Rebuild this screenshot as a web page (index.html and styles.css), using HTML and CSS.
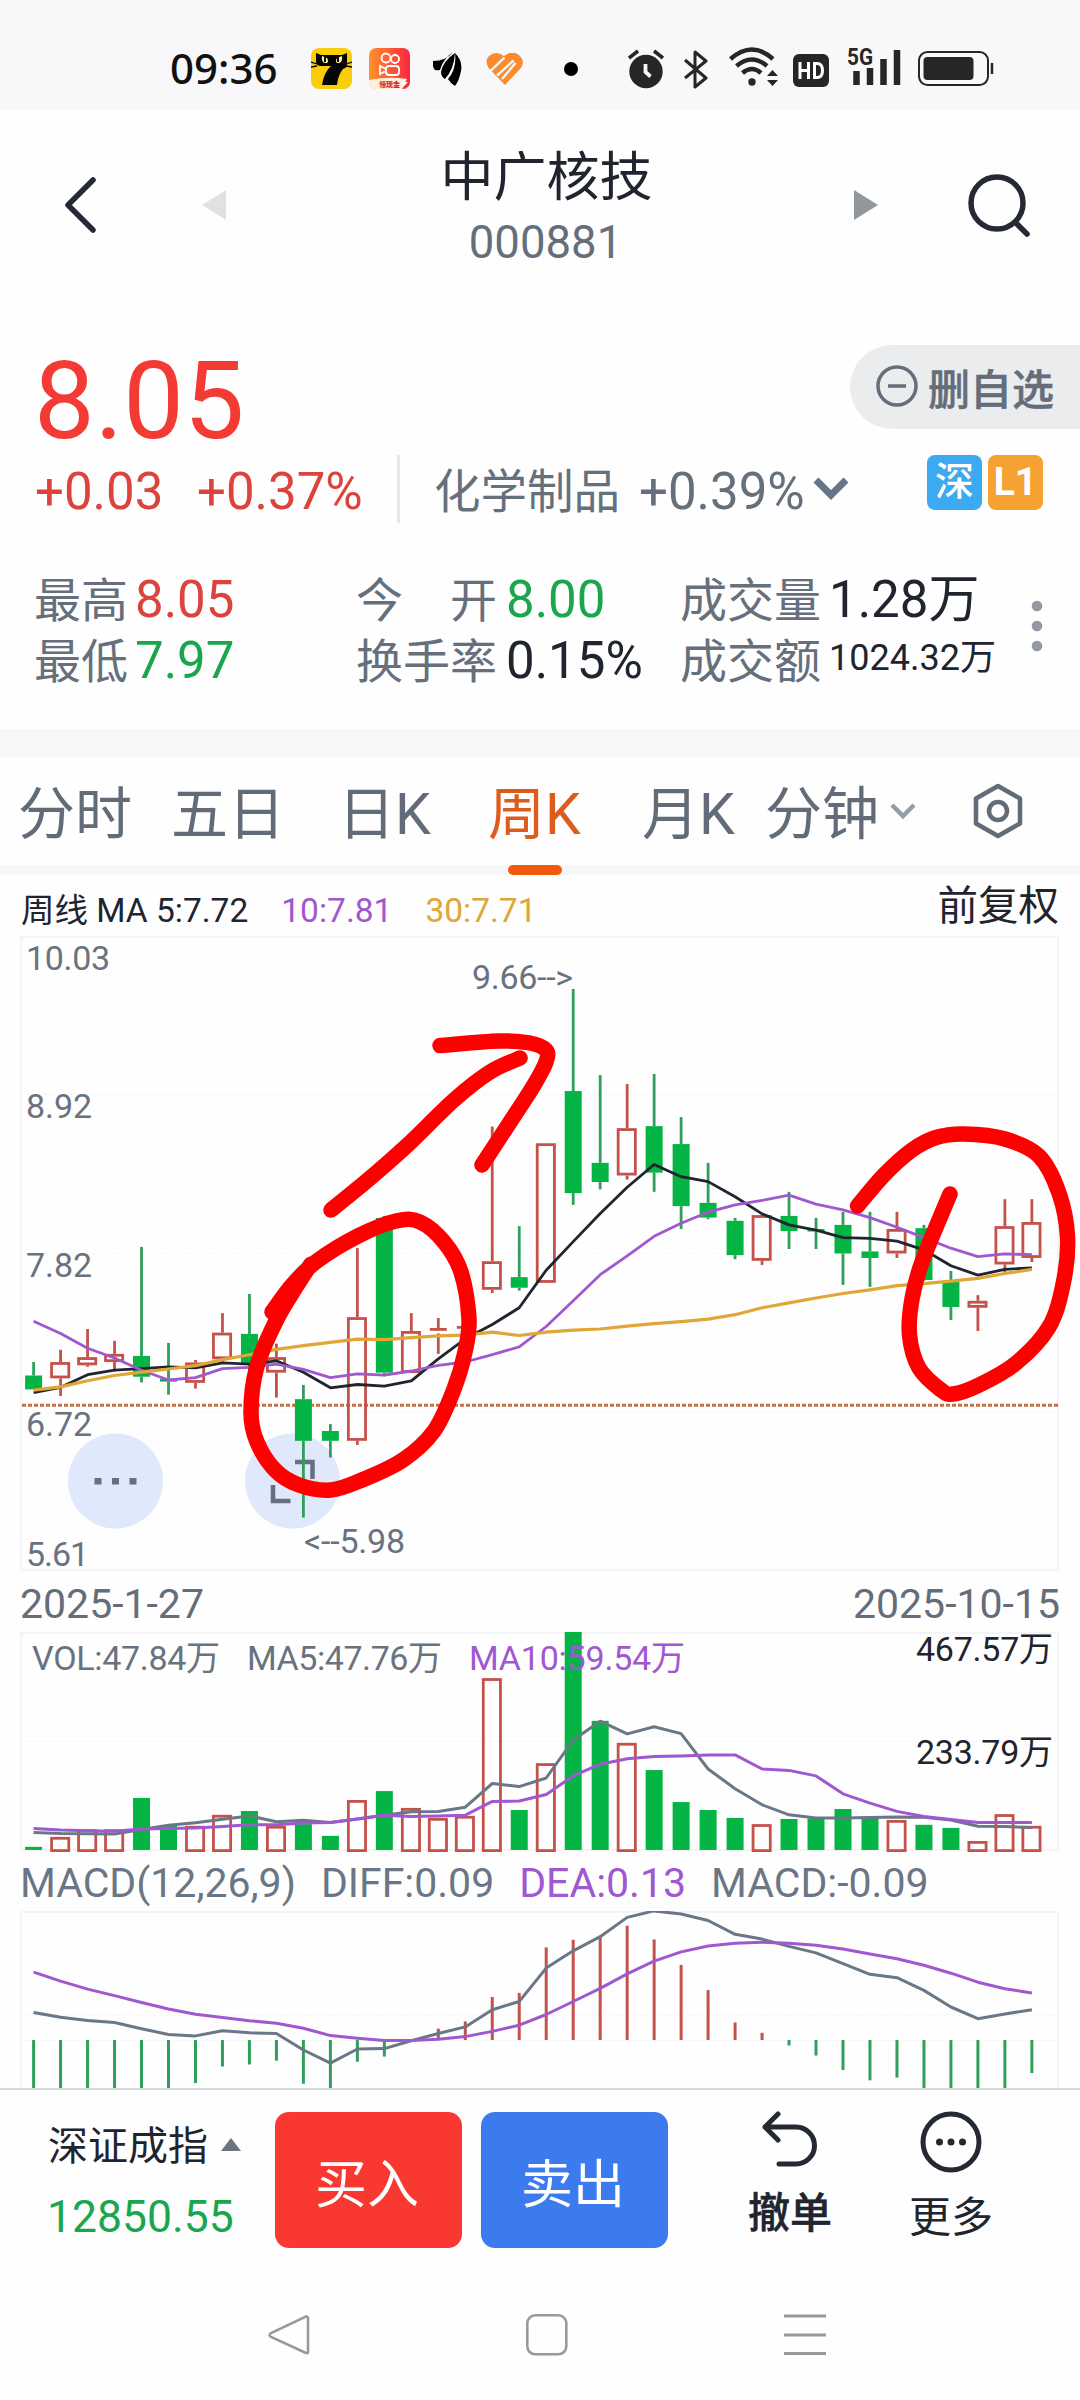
FILE: index.html
```html
<!DOCTYPE html>
<html lang="zh-CN">
<head>
<meta charset="utf-8">
<title>中广核技 000881</title>
<link rel="stylesheet" href="styles.css">
</head>
<body>
<header class="status">
  <span class="clock">09:36</span>
  <div class="apps">
    <svg width="41" height="41" viewBox="0 0 41 41"><rect width="41" height="41" rx="8" fill="#f9cd08"/><path d="M5 5l5 2h21l5-2v11q0 4-4 5q-5 6-6 16H11q2-13 9-19H9q-4-1-4-4z" fill="#050505"/><path d="M0 14l6 2M0 19l6-1M41 14l-6 2M41 19l-6-1" stroke="#050505" stroke-width="1.3"/><path d="M11 8q-1 8 5 7q2-2 0-5zM31 8q1 8-5 7q-2-2 0-5z" fill="#fff5a0"/><path d="M14 9v5M27 9v5" stroke="#050505" stroke-width="2"/></svg>
    <svg width="41" height="41" viewBox="0 0 41 41"><defs><linearGradient id="ks"><stop stop-color="#ff922d"/><stop offset="1" stop-color="#fb2540"/></linearGradient></defs><rect width="41" height="41" rx="7" fill="url(#ks)"/><g fill="none" stroke="#fff" stroke-width="1.800"><circle cx="17" cy="10" r="4.500"/><circle cx="26" cy="11" r="4"/><rect x="17" y="18" width="13" height="9" rx="3"/><path d="M17 21l-6-3v8l6-3"/></g><path d="M0 32q20-4 38-1l-5 10H7q-6 0-7-6z" fill="#fff0dc"/><text x="10" y="39" class="tiny">领现金</text><path d="M37 30l-6 6h4l-3 5 7-7h-4z" fill="#fff"/></svg>
    <svg width="29" height="34" viewBox="0 0 29 34" fill="#000"><path d="M0 9Q13 9 20 0Q10 7 7 18Q2 19 1 17Q-1 13 0 9zM8 20Q10 9 22 1Q21 17 12 27Q8 25 8 20zM15 27Q24 17 22 1Q30 9 28 19Q26 29 22 34Q18 32 15 27z"/></svg>
    <svg width="38" height="32" viewBox="0 0 38 32"><path d="M19 32L3 15.500Q-2 8 3 3Q10-3 18 3Q27-4 34 3Q40 9 34 16z" fill="#fb8b2d"/><path d="M18.500 4.500L4.500 18M27.500 7.500L11 22.500M29.500 10L16 26" stroke="#f8f8fa" stroke-width="2.400"/></svg>
  </div>
  <span class="dot"></span>
  <div class="system">
    <svg width="36" height="40" viewBox="0 0 36 40"><circle cx="18" cy="22.500" r="16.700" fill="#262626"/><path d="M1 9l9-7M35 9l-9-7" stroke="#262626" stroke-width="3.500"/><path d="M17.500 15v8l5 4.500" fill="none" stroke="#f8f8fa" stroke-width="3.800"/></svg>
    <svg width="24" height="40" viewBox="0 0 24 40"><path d="M1 11l21 18-11 9V3l11 9L1 29" fill="none" stroke="#262626" stroke-width="3" stroke-linejoin="round"/></svg>
    <svg width="50" height="40" viewBox="0 0 50 40"><g fill="none" stroke="#262626" stroke-width="4.500"><path d="M1.500 12Q23-7 44 12M7.500 19Q23 6 38 19M13.500 26Q23 18 32 26"/></g><circle cx="23" cy="35" r="3.700" fill="#262626"/><path d="M38 29l5.500-6 5.500 6zM38 33h11l-5.500 6z" fill="#262626"/></svg>
    <svg width="36" height="33" viewBox="0 0 36 33"><rect width="36" height="33" rx="6" fill="#262626"/><path d="M7 8v17M15.500 8v17M7 16.500h8.500M21.500 9.500v14h3q5-.5 5-7t-5-7z" fill="none" stroke="#fff" stroke-width="3"/></svg>
    <svg class="signal" width="54" height="40" viewBox="0 0 54 40"><text x="-1" y="18" class="five-g" textLength="26" lengthAdjust="spacingAndGlyphs">5G</text><path d="M8.500 24v14M22 21v17M35.500 12v26M49 3v35" stroke="#262626" stroke-width="6.500"/></svg>
    <svg width="76" height="35" viewBox="0 0 76 35"><rect x="1" y="1" width="69" height="33" rx="8.500" fill="none" stroke="#262626" stroke-width="2"/><rect x="5.500" y="6" width="50" height="23" rx="4" fill="#262626"/><path d="M74 12v11" stroke="#262626" stroke-width="2.500"/></svg>
  </div>
</header>

<nav class="titlebar">
  <svg class="back" width="36" height="56" viewBox="0 0 36 56"><path d="M31 3L6 28l25 25" fill="none" stroke="#252934" stroke-width="5.500" stroke-linecap="round" stroke-linejoin="round"/></svg>
  <svg class="prev" width="24" height="30" viewBox="0 0 24 30"><path d="M24 0v30L0 15z" fill="#dfe1e3"/></svg>
  <div class="stock"><h1>中广核技</h1><p>000881</p></div>
  <svg class="next" width="24" height="30" viewBox="0 0 24 30"><path d="M0 0v30l24-15z" fill="#91979b"/></svg>
  <svg class="search" width="66" height="66" viewBox="0 0 66 66"><circle cx="30" cy="30" r="26" fill="none" stroke="#252934" stroke-width="5.500"/><path d="M49 50l11 11" stroke="#252934" stroke-width="5.500" stroke-linecap="round"/></svg>
</nav>

<section class="quote">
  <div class="price-row">
    <strong class="price">8.05</strong>
    <button class="watch"><svg width="42" height="42" viewBox="0 0 42 42" fill="none" stroke="#646d79" stroke-width="3.500"><circle cx="21" cy="21" r="19"/><path d="M12 21h18"/></svg>删自选</button>
  </div>
  <div class="change-row">
    <span class="up">+0.03</span><span class="up pct">+0.37%</span>
    <span class="divider"></span>
    <span class="sector">化学制品</span><span class="sector-pct">+0.39%</span>
    <svg class="sector-arrow" width="36" height="24" viewBox="0 0 36 24"><path d="M3 3l15 15L33 3" fill="none" stroke="#65758a" stroke-width="7"/></svg>
    <span class="badge sz">深</span><span class="badge l1">L1</span>
  </div>
  <div class="stats">
    <span class="label">最高</span><span class="up">8.05</span>
    <span class="label spread"><i>今</i><i>开</i></span><span class="down">8.00</span>
    <span class="label">成交量</span><span>1.28万</span>
    <span class="label">最低</span><span class="down">7.97</span>
    <span class="label">换手率</span><span>0.15%</span>
    <span class="label">成交额</span><span class="small">1024.32万</span>
  </div>
  <svg class="more-dots" width="12" height="52" viewBox="0 0 12 52" fill="#9299a2"><circle cx="6" cy="6" r="5.300"/><circle cx="6" cy="26" r="5.300"/><circle cx="6" cy="46" r="5.300"/></svg>
</section>

<nav class="tabs">
  <span class="t1">分时</span><span class="t2">五日</span><span class="t3">日K</span><span class="t4 active">周K</span><span class="t5">月K</span><span class="t6">分钟</span>
  <svg class="tab-arrow" width="26" height="18" viewBox="0 0 26 18"><path d="M2 3l11 11L24 3" fill="none" stroke="#979da5" stroke-width="4.500"/></svg>
  <svg class="gear" width="52" height="56" viewBox="0 0 52 56" fill="none" stroke="#626b78" stroke-width="4.500" stroke-linejoin="round"><path d="M26 3L48 15.500v25L26 53 4 40.500v-25z"/><circle cx="26" cy="28" r="9"/></svg>
</nav>

<main class="charts">
  <div class="legend"><span>周线 MA 5:7.72</span><span class="purple">10:7.81</span><span class="gold">30:7.71</span><span class="adjust">前复权</span></div>
  <svg id="kline" class="plot" width="1080" height="635" viewBox="0 0 1080 635"></svg>
  <div class="dates"><span>2025-1-27</span><span>2025-10-15</span></div>
  <svg id="volume" class="plot" width="1080" height="221" viewBox="0 0 1080 221"></svg>
  <div class="macd-legend"><span>MACD(12,26,9)</span><span>DIFF:0.09</span><span class="purple">DEA:0.13</span><span>MACD:-0.09</span></div>
  <svg id="macd" class="plot clipped" width="1080" height="177" viewBox="0 0 1080 177"></svg>
  <svg id="marks" class="marks" width="1080" height="1213" viewBox="0 875 1080 1213"></svg>
</main>

<footer class="actions">
  <div class="index"><span>深证成指<svg width="20" height="13" viewBox="0 0 20 13"><path d="M10 0l10 13H0z" fill="#6b7480"/></svg></span><b>12850.55</b></div>
  <button class="buy">买入</button>
  <button class="sell">卖出</button>
  <div class="tool undo"><svg width="60" height="60" viewBox="0 0 60 60" fill="none" stroke="#252934" stroke-width="5" stroke-linecap="round" stroke-linejoin="round"><path d="M18 3L5 16l13 13M5 16h31a18.500 18.500 0 0 1 0 37H19"/></svg><b>撤单</b></div>
  <div class="tool"><svg width="62" height="62" viewBox="0 0 62 62"><circle cx="31" cy="31" r="28" fill="none" stroke="#252934" stroke-width="5"/><g fill="#252934"><circle cx="19.500" cy="31" r="3.500"/><circle cx="31" cy="31" r="3.500"/><circle cx="42.500" cy="31" r="3.500"/></g></svg><span>更多</span></div>
</footer>

<nav class="sysnav">
  <svg width="42" height="44" viewBox="0 0 42 44"><path d="M38 3.500Q40 3 40 5v34q0 2-2 1L3 24q-3-2 0-4z" fill="none" stroke="#999" stroke-width="2.500"/></svg>
  <svg width="42" height="44" viewBox="0 0 42 44"><rect x="1.300" y="2.300" width="39" height="39" rx="8" fill="none" stroke="#999" stroke-width="2.600"/></svg>
  <svg width="42" height="44" viewBox="0 0 42 44"><path d="M0 3h42M0 22h42M0 40.500h42" stroke="#999" stroke-width="3"/></svg>
</nav>
<script src="chart.js"></script>
</body>
</html>
```
FILE: styles.css
```css
* { box-sizing: border-box; margin: 0; padding: 0; }
body { width: 1080px; height: 2400px; background: #fefefe; color: #20242e; font-family: Roboto, "Noto Sans CJK SC", sans-serif; overflow: hidden; }
svg { display: block; flex: none; }
button { border: 0; font-family: inherit; }
span, b, strong, h1, p { white-space: nowrap; }
i { font-style: normal; }
.up { color: #dc433d; }
.down { color: #1ba64d; }
.purple { color: #a057cf; }
.gold { color: #e0a637; }

.status { height: 110px; background: #f8f8fa; display: flex; align-items: center; padding: 27px 0 0 170px; }
.clock { width: 108px; font: 500 42px/50px "Noto Sans", sans-serif; color: #111; margin-top: -2px; }
.apps { display: flex; align-items: center; margin-left: 33px; }
.apps svg:nth-child(2) { margin-left: 17px; }
.apps svg:nth-child(3) { margin-left: 23px; }
.apps svg:nth-child(4) { margin-left: 24px; }
.tiny { font: 900 7px "Noto Sans CJK SC", sans-serif; fill: #d82922; }
.dot { width: 14px; height: 14px; border-radius: 50%; background: #000; margin-left: 40px; }
.system { display: flex; align-items: center; margin-left: 50px; }
.system svg:nth-child(2) { margin-left: 20px; }
.system svg:nth-child(3) { margin-left: 21px; margin-bottom: 3px; }
.system svg:nth-child(4) { margin-left: 14px; margin-top: 3px; }
.system svg:nth-child(5) { margin-left: 19px; margin-bottom: 4px; }
.system svg:nth-child(6) { margin-left: 16px; }
.signal { overflow: visible; }
.five-g { font: 700 24px Roboto, sans-serif; fill: #262626; }

.titlebar { height: 190px; display: flex; align-items: center; padding-left: 62px; }
.prev { margin-left: 104px; }
.stock { width: 628px; text-align: center; padding: 9px 0 0 13px; }
.stock h1 { font-size: 53px; line-height: 66px; font-weight: 400; }
.stock p { font-size: 45.500px; line-height: 64px; color: #656e7b; padding-right: 2px; }
.search { margin-left: 89px; margin-top: 1px; }

.quote { position: relative; height: 429px; padding-left: 35px; }
.price-row { display: flex; justify-content: space-between; align-items: flex-start; padding-top: 45px; height: 155px; }
.price { font-size: 108px; line-height: 112px; font-weight: 400; color: #f33b34; margin-left: -1px; }
.watch { width: 230px; height: 84px; border-radius: 42px 0 0 42px; background: #ebecee; color: #646d79; display: flex; align-items: center; gap: 10px; padding: 0 0 2px 26px; font-size: 42px; font-weight: 500; -webkit-text-stroke: .5px; }
.change-row { display: flex; align-items: center; height: 68px; font-size: 51px; line-height: 68px; }
.change-row > span:not(.badge):not(.divider) { padding-top: 5px; }
.change-row .up { width: 162px; }
.change-row .pct { width: 166px; }
.divider { width: 3px; height: 68px; background: #e5e7ed; margin-left: 34px; }
.change-row > .sector { font-size: 46.500px; color: #66707d; margin-left: 34px; width: 205px; }
.sector-pct { color: #66707d; width: 166px; }
.sector-arrow { margin-left: 8px; }
.badge { width: 55px; height: 55px; border-radius: 8px; color: #fff; font-size: 39px; font-weight: 500; line-height: 55px; text-align: center; margin-bottom: 13px; }
.sz { background: #3baaf0; margin-left: 78px; }
.l1 { background: #f6a233; margin-left: 6px; font-weight: 700; }
.stats { display: grid; grid-template-columns: 101px 221px 150px 174px 149px 190px; grid-auto-rows: 61px; align-items: baseline; margin: 46px 0 0 -1px; font-size: 51px; line-height: 61px; }
.label { font-size: 47px; color: #66707d; }
.spread { display: flex; justify-content: space-between; width: 141px; }
.stats .small { font-size: 36px; align-self: start; line-height: 57px; }
.more-dots { position: absolute; left: 1031px; top: 300px; }

.tabs { height: 146px; border-top: 28px solid #f7f7fa; border-bottom: 10px solid #f7f7fa; display: flex; align-items: center; padding-left: 18px; font-size: 57px; line-height: 80px; color: #626b78; }
.tabs span { padding-top: 7px; }
.t1 { width: 153px; }
.t2 { width: 167px; }
.t3 { width: 150px; }
.t4 { width: 154px; }
.t5 { width: 123px; }
.t6 { width: 125px; }
.active { color: #dc5c1d; position: relative; }
.active::after { content: ""; position: absolute; left: 20px; bottom: -20px; width: 54px; height: 10px; border-radius: 5px; background: #f15a0c; }
.gear { margin-left: 56px; }

.charts { position: relative; height: 1213px; }
.plot { overflow: visible; }
.clipped { overflow: hidden; }
.legend { height: 61px; display: flex; align-items: flex-start; padding: 11px 21px 0 21px; font-size: 33.500px; line-height: 50px; }
.legend .purple { margin-left: 33px; }
.legend .gold { margin-left: 33px; }
.adjust { margin-left: auto; font-size: 40.500px; line-height: 40px; }
.dates { height: 61px; display: flex; justify-content: space-between; padding: 0 20px; font-size: 41px; line-height: 66px; color: #656d79; }
.macd-legend { height: 58px; display: flex; padding-left: 20px; font-size: 41px; line-height: 60px; color: #6a7685; }
.macd-legend span:nth-child(n+2) { margin-left: 25px; }
.marks { position: absolute; left: 0; top: 0; }
.axis { font: 34px Roboto, "Noto Sans CJK SC", sans-serif; fill: #69727f; }
.dark { fill: #20242e; }
.violet { fill: #a057cf; }

.actions { height: 177px; border-top: 2px solid #d5dadb; display: flex; align-items: flex-start; padding-left: 48px; }
.index { width: 227px; padding-top: 29px; }
.index span { display: flex; align-items: center; gap: 13px; font-size: 40px; line-height: 56px; }
.index svg { margin-bottom: 6px; }
.index b { display: block; font-size: 44.500px; line-height: 60px; font-weight: 400; color: #1ba64d; margin-top: 12px; margin-left: -1px; }
.buy, .sell { width: 187px; height: 136px; margin-top: 22px; border-radius: 14px; color: #fff; font-size: 52px; padding: 1px 3px 0 0; }
.buy { background: #f93831; }
.sell { background: #3c7bed; margin-left: 19px; }
.tool { width: 120px; display: flex; flex-direction: column; align-items: center; font-size: 42px; line-height: 60px; padding-top: 21px; margin-left: 41px; }
.tool span { margin-top: 15px; }
.undo { margin-left: 62px; }
.tool b { font-weight: 500; margin-top: 13px; -webkit-text-stroke: .5px; }
.sysnav { display: flex; justify-content: space-between; padding: 48px 254px 0 268px; }
```
FILE: chart.js
```js
const STEP = 26.98;
const cx = i => 33.6 + STEP * i;
const GREEN = '#04b444', RED = '#c4514a', SLATE = '#6a7786', VIOLET = '#a057cf';

const line = (x1, y1, x2, y2, c, w, extra = '') =>
  `<path d="M${x1} ${y1}L${x2} ${y2}" stroke="${c}" stroke-width="${w}" ${extra}/>`;
const curve = (vals, y, c, w = 3) =>
  `<polyline fill="none" stroke="${c}" stroke-width="${w}" stroke-linejoin="round" points="${vals.map((v, i) => cx(i).toFixed(1) + ',' + y(v).toFixed(1)).join(' ')}"/>`;
const text = (x, y, s, len, cls = '') =>
  `<text x="${x}" y="${y}" class="axis ${cls}" textLength="${len}">${s}</text>`;
const frame = h => `<rect x="21" y="1" width="1037" height="${h}" fill="none" stroke="#f4f4f6" stroke-width="2"/>`;
const dash = y => line(21, y, 1058, y, '#f4f5f6', 1, 'stroke-dasharray="4 2"');
const bar = (i, up, t, b) => up
  ? `<rect x="${cx(i) - 9}" y="${t + 1.4}" width="17.2" height="${Math.max(b - t - 2.8, 1)}" fill="none" stroke="${RED}" stroke-width="2.8"/>`
  : `<rect x="${cx(i) - 8.5}" y="${t}" width="17" height="${Math.max(b - t, 2.5)}" fill="${GREEN}"/>`;

/* candles: [direction, high, body top, body bottom, low] */
const candles = [
  [0,985,1018,1052,1052],[1,955,985,1025,1068],[1,904,973,993,997],[1,933,965,985,1008],[0,703,970,1021,1035],
  [0,938,1026,1033,1065],[1,980,986,1036,1050],[1,865,913,978,985],[0,818,916,990,1020],[1,940,973,1011,1072],
  [0,1041,1076,1178,1366],[0,1137,1154,1178,1219],[1,706,875,1178,1188],[0,627,632,1011,1020],[1,865,909,1012,1012],
  [2,877,905,905,965],[2,897,900,900,903],[1,408,738,808,816],[0,652,777,803,810],[1,449,449,791,791],
  [0,71,321,571,600],[0,282,497,544,562],[1,304,412,528,538],[0,279,407,521,568],[0,385,451,603,659],
  [0,497,595,631,635],[0,632,639,723,733],[1,625,625,737,747],[0,568,627,664,708],[0,632,659,665,708],
  [0,617,649,719,796],[0,617,714,730,801],[1,617,659,719,730],[0,649,657,784,786],[0,762,789,850,882],
  [1,821,835,852,909],[1,586,652,746,765],[1,586,642,730,740]];
const ma5 = [1060,1047,1016,1005,1001,997,999,987,990,982,1010,1048,1040,1044,1031,977,928,893,852,760,690,621,557,501,531,543,580,622,649,662,680,682,689,710,749,772,758,754];
const ma10 = [885,915,951,975,1005,1029,1023,1001,998,990,1003,1023,1014,1017,1007,993,985,967,948,898,835,771,725,677,645,618,600,589,576,598,612,631,655,680,706,727,720,722];
const ma30 = [1054,1046,1031,1018,1010,1002,994,979,967,954,945,937,929,930,925,921,919,912,920,912,907,904,897,891,886,880,869,852,840,828,817,808,798,793,787,780,768,758];

const py = v => v / 2.45 + 24;
let k = frame(633) + [329, 718, 1108].map(v => dash(py(v))).join('');
k += line(22, py(1091), 1058, py(1091), '#c4704a', 3, 'stroke-dasharray="4 2"');
k += `<circle cx="115.5" cy="545" r="47.5" fill="#dfe9fb"/><circle cx="292.5" cy="545" r="47.5" fill="#dfe9fb"/>`;
k += `<path d="M94.5 542h7v6.5h-7zM112 542h7v6.5h-7zM129.5 542h7v6.5h-7z" fill="#66707e"/>`;
k += `<path d="M295 526h17.5v17M273 549v16h17.5" fill="none" stroke="#66707e" stroke-width="4.5"/>`;
candles.forEach(([up, h, t, b, l], i) => {
  const x = cx(i), c = up ? RED : '#2f9f5b';
  if (up === 2) {
    k += line(x - 8.5, py(t), x + 8.5, py(t), c, 2.8) + line(x, py(h), x, py(t), c, 2.8) + (l > b + 5 ? line(x, py(b) + 4, x, py(l), c, 2.8) : '');
  } else {
    k += line(x, py(h), x, py(t), c, 2.8) + line(x, py(b), x, py(l), c, 2.8) + bar(i, up, py(t), py(b));
  }
});
k += curve(ma5, py, '#20242e', 2.8) + curve(ma10, py, VIOLET, 2.8) + curve(ma30, py, '#e0a637', 3.2);
k += text(26, 33.5, '10.03', 84) + text(26, 182, '8.92', 66) + text(26, 340.5, '7.82', 66) + text(26, 499.5, '6.72', 66) + text(26, 630, '5.61', 63);
k += text(472, 52.5, '9.66--&gt;', 101) + text(304, 616.5, '&lt;--5.98', 101);
document.getElementById('kline').innerHTML = k;

const vols = [[0,833],[1,804],[1,782],[1,782],[0,691],[0,772],[1,772],[1,740],[0,729],[1,772],[0,767],[0,801],[1,697],[0,671],[1,720],[1,749],[1,743],[1,343],[0,726],[1,590],[0,209],[0,467],[1,531],[0,610],[0,703],[0,726],[0,749],[1,767],[0,752],[0,750],[0,723],[0,747],[1,755],[0,769],[0,778],[1,816],[1,738],[1,772]];
const vma5 = [791,794,795,796,783,770,763,753,743,760,756,762,752,741,731,730,718,649,658,633,523,468,505,484,504,607,664,711,740,749,749,748,746,747,755,773,774,777];
const vma10 = [780,784,786,788,781,780,778,774,769,769,764,762,752,741,745,743,741,701,700,681,627,593,577,571,569,566,566,607,611,627,679,706,730,745,754,762,762,762];
const vy = v => v / 2.904 - 72;
let v = frame(217) + dash(vy(527));
vols.forEach(([up, t], i) => { v += bar(i, up, vy(t), up ? vy(848) : vy(842)); });
v += curve(vma5, vy, SLATE) + curve(vma10, vy, VIOLET);
v += text(32, 38, 'VOL:47.84万', 188) + text(247, 38, 'MA5:47.76万', 195) + text(469, 38, 'MA10:59.54万', 216, 'violet');
v += text(916, 29, '467.57万', 137, 'dark') + text(916, 132, '233.79万', 137, 'dark');
document.getElementById('volume').innerHTML = v;

const hist = [1540,1540,1540,1540,1540,1540,1519,1471,1465,1454,1521,1540,1457,1442,1395,1361,1340,1269,1257,1125,1103,1095,1062,1102,1176,1249,1343,1373,1410,1439,1481,1511,1503,1540,1540,1540,1540,1490];
const diff = [1314,1328,1337,1343,1361,1378,1382,1367,1373,1375,1423,1461,1420,1419,1396,1375,1356,1306,1282,1185,1135,1094,1038,1019,1028,1047,1087,1101,1122,1141,1172,1203,1213,1250,1298,1332,1318,1306];
const dea = [1197,1223,1246,1265,1285,1304,1319,1329,1338,1345,1360,1381,1389,1395,1395,1392,1384,1369,1351,1320,1282,1244,1202,1165,1138,1121,1113,1110,1113,1119,1130,1144,1158,1177,1200,1226,1245,1257];
const my = v => v / 2.904 - 351;
let m = frame(200) + dash(my(1322)) + line(21, my(1395), 1058, my(1395), '#f4f5f6', 1);
hist.forEach((h, i) => { m += line(cx(i), my(1394), cx(i), my(h), h > 1394 ? '#2f9f5b' : RED, 3); });
m += curve(diff, my, SLATE) + curve(dea, my, VIOLET);
document.getElementById('macd').innerHTML = m;

/* freehand marker strokes, smoothed through their points */
const strokes = [
  [[331,1210],[369,1179],[407,1145.5],[454,1100],[490,1072],[520,1058]],
  [[440,1045.5],[499,1041],[530,1043],[546,1050],[546,1062],[534,1085],[516,1113],[482,1165]],
  [[311,1264],[296,1287],[275,1323],[256.5,1368],[251,1413],[257,1442],[275,1470],[299,1485],[331,1490],[362,1480],[403,1460],[434,1431],[454,1389],[465,1352],[469,1319],[461,1272],[444,1242],[420,1222],[396,1221],[358,1236],[317,1261],[293,1284],[272,1312]],
  [[857.5,1206],[884,1175],[912,1150],[936,1137.5],[964,1134],[1005,1139],[1039,1156],[1059,1193],[1067.5,1237],[1063.5,1282],[1049,1327],[1015,1364],[977,1386],[953,1394],[941,1390],[919,1368],[909.5,1335],[912,1299],[922,1262],[950,1194]]];
const smooth = p => {
  let d = `M${p[0]}`;
  for (let i = 0; i < p.length - 1; i++) {
    const a = p[i - 1] || p[i], b = p[i], c = p[i + 1], e = p[i + 2] || c;
    d += `C${b[0] + (c[0] - a[0]) / 6} ${b[1] + (c[1] - a[1]) / 6} ${c[0] - (e[0] - b[0]) / 6} ${c[1] - (e[1] - b[1]) / 6} ${c}`;
  }
  return d;
};
document.getElementById('marks').innerHTML =
  strokes.map(p => `<path d="${smooth(p)}" fill="none" stroke="#f00" stroke-width="15.5" stroke-linecap="round" stroke-linejoin="round"/>`).join('')
  + '<path d="M311 1264L272 1312L292 1300Z" fill="#f00"/>';
```
